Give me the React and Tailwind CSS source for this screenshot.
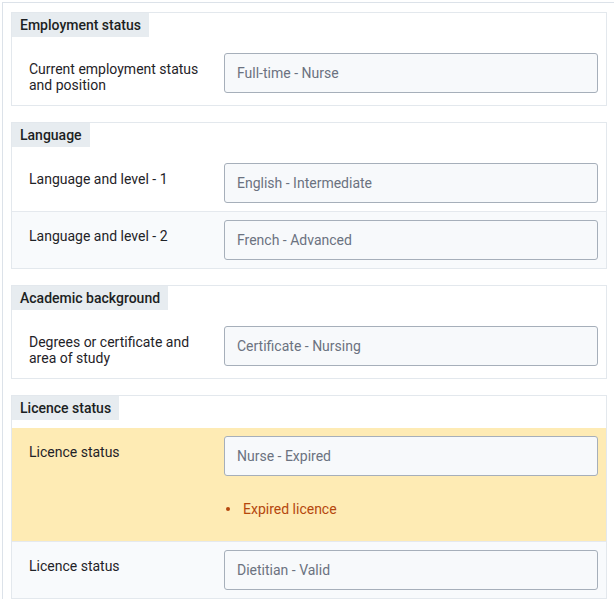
import React from 'react';

const sections = [
  {
    title: 'Employment status',
    rows: [{ label: 'Current employment status and position', value: 'Full-time - Nurse' }],
  },
  {
    title: 'Language',
    rows: [
      { label: 'Language and level - 1', value: 'English - Intermediate' },
      { label: 'Language and level - 2', value: 'French - Advanced' },
    ],
  },
  {
    title: 'Academic background',
    rows: [{ label: 'Degrees or certificate and area of study', value: 'Certificate - Nursing' }],
  },
  {
    title: 'Licence status',
    rows: [
      { label: 'Licence status', value: 'Nurse - Expired', error: 'Expired licence' },
      { label: 'Licence status', value: 'Dietitian - Valid' },
    ],
  },
];

const Row = ({ row, index }) => {
  const bg = row.error ? 'bg-[#feebb4]' : index % 2 === 1 ? 'bg-[#f8fafc]' : 'bg-white';
  return (
    <div className={`flex pl-[17px] pr-2 py-2 ${bg} ${index > 0 ? 'border-t border-[#e5e9ee]' : ''}`}>
      <div className="w-[195px] shrink-0 pt-2 pb-1 pr-4 text-[14px] leading-4 text-[#1f2328]">
        {row.label}
      </div>
      <div className="flex-1">
        <div className="h-10 flex items-center pl-3 rounded-[3px] border border-[#a6afba] bg-[#f7f9fb] text-[14px] text-[#6b7280]">
          {row.value}
        </div>
        {row.error && (
          <ul className="mt-[23px] mb-[14px] pl-[2px]">
            <li className="flex items-center text-[14px] leading-5 text-[#b5470d]">
              <span className="w-[4px] h-[4px] rounded-full bg-[#b5470d] mr-[13px]"></span>
              {row.error}
            </li>
          </ul>
        )}
      </div>
    </div>
  );
};

const App = () => {
  return (
    <div className="min-h-[604px] bg-white pl-[2px] pt-[2px] font-['Roboto',sans-serif] overflow-hidden">
      <div className="border-l border-t border-[#dce2e9] pl-2 pt-[9px] w-[612px]">
        {sections.map((section, i) => (
          <div key={i} className="w-[596px] mb-4 border border-[#e3e8ed] bg-white">
            <div className="inline-block px-2 h-6 leading-6 bg-[#e7ecf0] text-[14px] font-medium text-[#1c1f23]">
              {section.title}
            </div>
            <div className="pt-2">
              {section.rows.map((row, j) => (
                <Row key={j} row={row} index={j} />
              ))}
            </div>
          </div>
        ))}
      </div>
    </div>
  );
};

export default App;
